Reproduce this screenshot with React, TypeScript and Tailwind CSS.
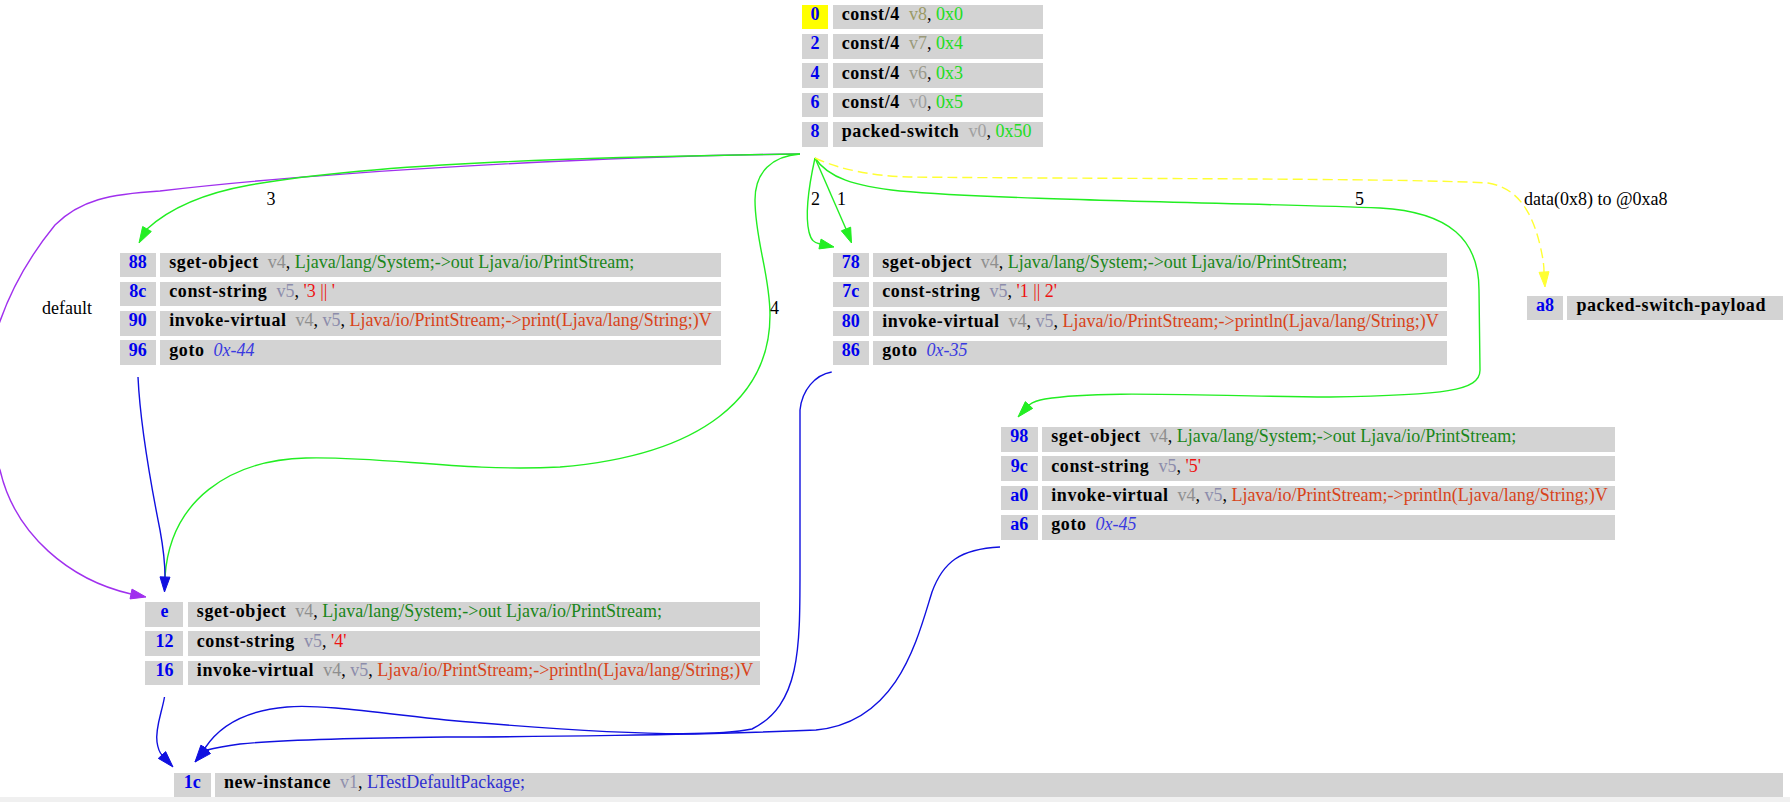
import React from "react";

type Row = { a: string; hl?: boolean; op: string; args?: React.ReactNode };

const regColor: Record<string, string> = {
  v8: "text-[#9a9a66]",
  v7: "text-[#9a9a7a]",
  v6: "text-[#9a9a8c]",
  v0: "text-[#a0a0a0]",
  v4: "text-[#8e8e8e]",
  v5: "text-[#8c8cab]",
  v1: "text-[#9090ad]",
};

const R = ({ v }: { v: string }) => <span className={regColor[v]}>{v}</span>;
const K = ({ t }: { t: string }) => <span className="text-[#22dd22]">{t}</span>;
const S = ({ t }: { t: string }) => <span className="text-[#ee1111]">{t}</span>;
const C = ({ t }: { t: string }) => <span className="text-[#1a861a]">{t}</span>;
const M = ({ t }: { t: string }) => <span className="text-[#d8431a]">{t}</span>;
const T = ({ t }: { t: string }) => <span className="italic text-[#3a3ae0]">{t}</span>;
const P = ({ t }: { t: string }) => <span className="text-[#2f2fd0]">{t}</span>;

const SYS = "Ljava/lang/System;->out Ljava/io/PrintStream;";
const PRINTLN = "Ljava/io/PrintStream;->println(Ljava/lang/String;)V";
const PRINT = "Ljava/io/PrintStream;->print(Ljava/lang/String;)V";

function Node({ pos, aw, iw, rows }: { pos: string; aw: string; iw: string; rows: Row[] }) {
  return (
    <div className={`absolute ${pos} flex flex-col gap-[4.6px]`}>
      {rows.map((r) => (
        <div key={r.a} className="flex gap-[4.4px]">
          <div
            className={`${aw} h-[24.7px] pb-[5px] flex items-center justify-center font-bold text-[#0000ee] ${
              r.hl ? "bg-[#ffff00]" : "bg-[#d3d3d3]"
            }`}
          >
            {r.a}
          </div>
          <div className={`${iw} h-[24.7px] pb-[5px] pl-[9px] flex items-center bg-[#d3d3d3] whitespace-pre`}>
            <span className="font-bold tracking-[0.6px] text-black">{r.op}</span>
            {r.args ? <span className="ml-[9px]">{r.args}</span> : null}
          </div>
        </div>
      ))}
    </div>
  );
}

function Arrow({ from, tip, color }: { from: [number, number]; tip: [number, number]; color: string }) {
  const dx = tip[0] - from[0];
  const dy = tip[1] - from[1];
  const len = Math.hypot(dx, dy) || 1;
  const nx = (-dy / len) * 5;
  const ny = (dx / len) * 5;
  const pts = `${tip[0]},${tip[1]} ${from[0] + nx},${from[1] + ny} ${from[0] - nx},${from[1] - ny}`;
  return <polygon points={pts} fill={color} stroke={color} strokeWidth={1} />;
}

const GREEN = "#22ee22";
const BLUE = "#1010e0";
const PURPLE = "#a030ee";
const YELLOW = "#ffff33";

function Edges() {
  return (
    <svg className="absolute inset-0" width={1790} height={797} viewBox="0 0 1790 797" fill="none">
      {/* default */}
      <path
        d="M800,154 C600,156 320,172 160,191 C110,194 80,200 55,225 C10,280 -40,380 0,470 C15,535 70,580 131,594"
        stroke={PURPLE}
        strokeWidth={1.4}
      />
      <Arrow from={[131, 594]} tip={[146, 597]} color={PURPLE} />
      {/* 3 */}
      <path d="M800,154 C600,157 380,162 250,185 C205,193 170,208 147,229" stroke={GREEN} strokeWidth={1.4} />
      <Arrow from={[147, 229]} tip={[139, 243]} color={GREEN} />
      {/* 4 */}
      <path
        d="M800,154 C772,156 755,172 755,200 C755,240 770,275 770,315 C770,395 705,455 560,467 C460,472 385,456 306,458 C230,460 170,500 165,577"
        stroke={GREEN}
        strokeWidth={1.4}
      />
      {/* 2 */}
      <path d="M815,158 C809,185 805,215 809,232 C811,240 814,243 820,244" stroke={GREEN} strokeWidth={1.4} />
      <Arrow from={[820, 244]} tip={[834, 247]} color={GREEN} />
      {/* 1 */}
      <path d="M815,158 L846,229" stroke={GREEN} strokeWidth={1.4} />
      <Arrow from={[846, 229]} tip={[851.5, 243]} color={GREEN} />
      {/* 5 */}
      <path
        d="M815,158 C828,178 855,186 900,191 C1000,200 1250,203 1380,208 C1450,212 1479,240 1479,290 L1480,370 C1480,391 1445,395 1330,397 C1200,396 1100,390 1045,399 C1038,400 1033,402 1029,405"
        stroke={GREEN}
        strokeWidth={1.4}
      />
      <Arrow from={[1029, 405]} tip={[1018, 417]} color={GREEN} />
      {/* data */}
      <path
        d="M815,158 C840,170 875,176 909,177 C1100,179 1400,178 1488,183 C1518,188 1532,212 1540,245 C1543,258 1544,265 1544,272"
        stroke={YELLOW}
        strokeWidth={1.4}
        strokeDasharray="10 5"
      />
      <Arrow from={[1544, 272]} tip={[1545, 287]} color={YELLOW} />
      {/* 96 -> e */}
      <path d="M138,377 C140,420 150,480 160,530 C164,552 165,565 165,577" stroke={BLUE} strokeWidth={1.4} />
      <Arrow from={[165, 577]} tip={[164.5, 592]} color={BLUE} />
      {/* 16 -> 1c */}
      <path d="M164.5,697 C162,712 155,728 157,742 C158,749 159,752 162,755" stroke={BLUE} strokeWidth={1.4} />
      <Arrow from={[162, 755]} tip={[173, 767]} color={BLUE} />
      {/* 86 -> 1c */}
      <path
        d="M831.7,372 C815,375 802,390 800,410 L800,570 C800,650 800,705 752,729 C700,740 560,730 446,720 C380,713 320,704 287,707 C250,710 222,722 205,748"
        stroke={BLUE}
        strokeWidth={1.4}
      />
      <Arrow from={[205, 748]} tip={[195, 762]} color={BLUE} />
      {/* a6 -> 1c */}
      <path
        d="M1000,547 C960,549 943,562 932,592 C917,640 898,722 816,730 C700,735 520,737 446,737 C350,738 270,741 240,744 C226,746 215,748 207,750"
        stroke={BLUE}
        strokeWidth={1.4}
      />
      <Arrow from={[207, 750]} tip={[195, 762]} color={BLUE} />
    </svg>
  );
}

function Label({ pos, children }: { pos: string; children: React.ReactNode }) {
  return <span className={`absolute ${pos} leading-[20px] whitespace-nowrap text-black`}>{children}</span>;
}

export default function App() {
  return (
    <div className="w-[1790px] h-[802px] overflow-hidden bg-white flex flex-col text-[18px] font-['Liberation_Serif','Times_New_Roman',serif]">
      <div className="relative h-[797px] w-full">
        <Edges />

        <Label pos="left-[266.5px] top-[189px]">3</Label>
        <Label pos="left-[42px] top-[298px]">default</Label>
        <Label pos="left-[770px] top-[298px]">4</Label>
        <Label pos="left-[811px] top-[189px]">2</Label>
        <Label pos="left-[837px] top-[189px]">1</Label>
        <Label pos="left-[1355px] top-[189px]">5</Label>
        <Label pos="left-[1524px] top-[189px]">data(0x8) to @0xa8</Label>

        <Node
          pos="left-[801.7px] top-[4.7px]"
          aw="w-[26.6px]"
          iw="w-[210.6px]"
          rows={[
            { a: "0", hl: true, op: "const/4", args: <><R v="v8" />, <K t="0x0" /></> },
            { a: "2", op: "const/4", args: <><R v="v7" />, <K t="0x4" /></> },
            { a: "4", op: "const/4", args: <><R v="v6" />, <K t="0x3" /></> },
            { a: "6", op: "const/4", args: <><R v="v0" />, <K t="0x5" /></> },
            { a: "8", op: "packed-switch", args: <><R v="v0" />, <K t="0x50" /></> },
          ]}
        />

        <Node
          pos="left-[119.5px] top-[252.5px]"
          aw="w-[36.3px]"
          iw="w-[560.5px]"
          rows={[
            { a: "88", op: "sget-object", args: <><R v="v4" />, <C t={SYS} /></> },
            { a: "8c", op: "const-string", args: <><R v="v5" />, <S t="'3 || '" /></> },
            { a: "90", op: "invoke-virtual", args: <><R v="v4" />, <R v="v5" />, <M t={PRINT} /></> },
            { a: "96", op: "goto", args: <T t="0x-44" /> },
          ]}
        />

        <Node
          pos="left-[832.8px] top-[252.7px]"
          aw="w-[36px]"
          iw="w-[574px]"
          rows={[
            { a: "78", op: "sget-object", args: <><R v="v4" />, <C t={SYS} /></> },
            { a: "7c", op: "const-string", args: <><R v="v5" />, <S t="'1 || 2'" /></> },
            { a: "80", op: "invoke-virtual", args: <><R v="v4" />, <R v="v5" />, <M t={PRINTLN} /></> },
            { a: "86", op: "goto", args: <T t="0x-35" /> },
          ]}
        />

        <Node
          pos="left-[1527px] top-[295.5px]"
          aw="w-[36px]"
          iw="w-[215.6px]"
          rows={[{ a: "a8", op: "packed-switch-payload" }]}
        />

        <Node
          pos="left-[1000.8px] top-[427px]"
          aw="w-[37px]"
          iw="w-[572.8px]"
          rows={[
            { a: "98", op: "sget-object", args: <><R v="v4" />, <C t={SYS} /></> },
            { a: "9c", op: "const-string", args: <><R v="v5" />, <S t="'5'" /></> },
            { a: "a0", op: "invoke-virtual", args: <><R v="v4" />, <R v="v5" />, <M t={PRINTLN} /></> },
            { a: "a6", op: "goto", args: <T t="0x-45" /> },
          ]}
        />

        <Node
          pos="left-[145.4px] top-[602px]"
          aw="w-[38px]"
          iw="w-[572.2px]"
          rows={[
            { a: "e", op: "sget-object", args: <><R v="v4" />, <C t={SYS} /></> },
            { a: "12", op: "const-string", args: <><R v="v5" />, <S t="'4'" /></> },
            { a: "16", op: "invoke-virtual", args: <><R v="v4" />, <R v="v5" />, <M t={PRINTLN} /></> },
          ]}
        />

        <Node
          pos="left-[174px] top-[772.7px]"
          aw="w-[36.5px]"
          iw="w-[1568px]"
          rows={[{ a: "1c", op: "new-instance", args: <><R v="v1" />, <P t="LTestDefaultPackage;" /></> }]}
        />
      </div>
      <div className="h-[5px] w-full bg-[#f0f0f0]" />
    </div>
  );
}
